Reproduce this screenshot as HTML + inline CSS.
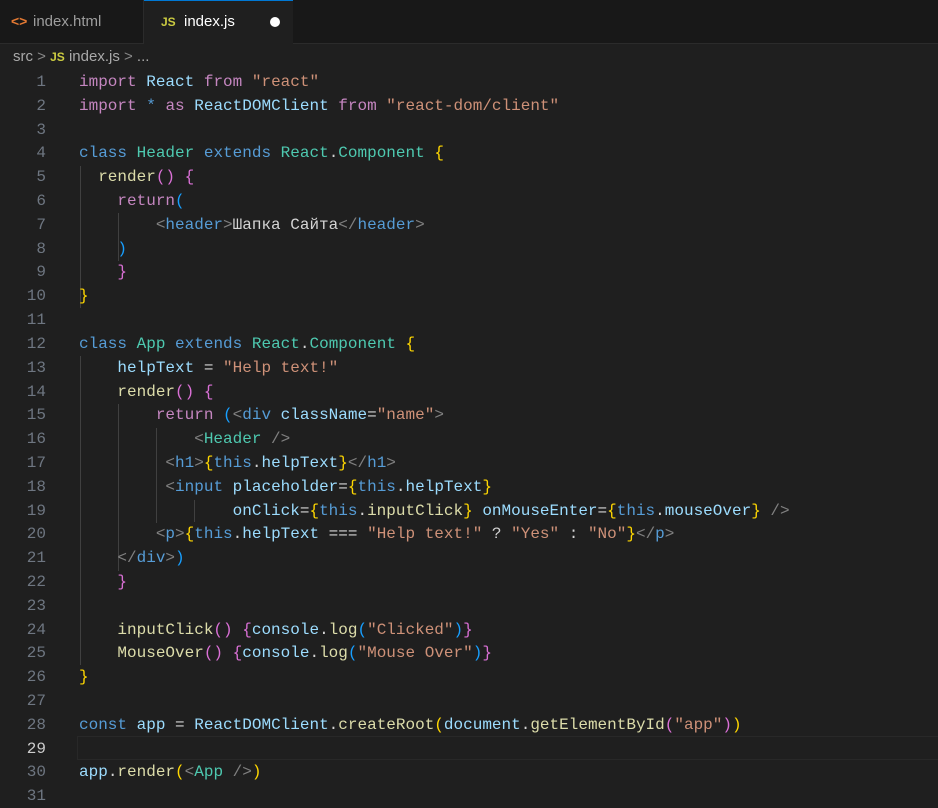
<!DOCTYPE html>
<html><head><meta charset="utf-8"><style>
body{margin:0;width:938px;height:808px;background:#1f1f1f;overflow:hidden;font-family:"Liberation Sans",sans-serif;position:relative}
.tabs{position:absolute;left:0;top:0;width:938px;height:43px;background:#181818;border-bottom:1px solid #2b2b2b}
.tab{position:absolute;top:0;height:43px;font-size:15px;line-height:43px}
.t1{left:0;width:143px;color:#9d9d9d;border-right:1px solid #2b2b2b}
.t2{left:144px;width:149px;background:#1f1f1f;color:#fff;border-top:1px solid #0078d4;box-sizing:border-box;height:44px}
.crumb{position:absolute;top:48px;left:13px;font-size:15px;color:#a9a9a9}
.js{color:#cbcb41;font-weight:bold;font-size:12px}
.code{position:absolute;left:0;top:0;font-family:"Liberation Mono",monospace;font-size:16px}
.ln{position:absolute;left:0;width:46px;text-align:right;color:#6e7681;height:24px;line-height:24px}
.cl{position:absolute;left:79px;white-space:pre;color:#d4d4d4;height:24px;line-height:24px}
.k{color:#c586c0}.b{color:#569cd6}.v{color:#9cdcfe}.t{color:#4ec9b0}.s{color:#ce9178}.f{color:#dcdcaa}.g{color:#ffd700}.p{color:#da70d6}.l{color:#179fff}.a{color:#808080}.w{color:#d4d4d4}
.guide{position:absolute;width:1px;background:#404040}
.cur{position:absolute;left:77px;top:736px;width:861px;height:22px;border:1px solid #282828;border-right:none}
</style></head><body>
<div class="tabs">
<div class="tab t1"><span style="position:absolute;left:11px;color:#e37933;font-weight:bold;font-size:14px">&lt;&gt;</span><span style="position:absolute;left:33px">index.html</span></div>
<div class="tab t2"><span class="js" style="position:absolute;left:17px;line-height:42px">JS</span><span style="position:absolute;left:40px;line-height:42px">index.js</span><span style="position:absolute;left:126px;top:16px;width:10px;height:10px;border-radius:50%;background:#fff"></span></div>
</div>
<div class="crumb">src <span style="color:#888">&gt;</span> <span class="js">JS</span> index.js <span style="color:#888">&gt;</span> ...</div>
<div class="guide" style="left:80px;top:166px;height:142px"></div>
<div class="guide" style="left:118px;top:213px;height:48px"></div>
<div class="guide" style="left:80px;top:356px;height:309px"></div>
<div class="guide" style="left:118px;top:404px;height:167px"></div>
<div class="guide" style="left:156px;top:428px;height:95px"></div>
<div class="guide" style="left:194px;top:500px;height:22px"></div>
<div class="cur"></div>
<div class="code">
<div class="ln" style="top:70px">1</div><div class="cl" style="top:70px"><span class="k">import</span> <span class="v">React</span> <span class="k">from</span> <span class="s">"react"</span></div>
<div class="ln" style="top:94px">2</div><div class="cl" style="top:94px"><span class="k">import</span> <span class="b">*</span> <span class="k">as</span> <span class="v">ReactDOMClient</span> <span class="k">from</span> <span class="s">"react-dom/client"</span></div>
<div class="ln" style="top:118px">3</div>
<div class="ln" style="top:141px">4</div><div class="cl" style="top:141px"><span class="b">class</span> <span class="t">Header</span> <span class="b">extends</span> <span class="t">React</span>.<span class="t">Component</span> <span class="g">{</span></div>
<div class="ln" style="top:165px">5</div><div class="cl" style="top:165px">  <span class="f">render</span><span class="p">()</span> <span class="p">{</span></div>
<div class="ln" style="top:189px">6</div><div class="cl" style="top:189px">    <span class="k">return</span><span class="l">(</span></div>
<div class="ln" style="top:213px">7</div><div class="cl" style="top:213px">        <span class="a">&lt;</span><span class="b">header</span><span class="a">&gt;</span>Шапка Сайта<span class="a">&lt;/</span><span class="b">header</span><span class="a">&gt;</span></div>
<div class="ln" style="top:237px">8</div><div class="cl" style="top:237px">    <span class="l">)</span></div>
<div class="ln" style="top:260px">9</div><div class="cl" style="top:260px">    <span class="p">}</span></div>
<div class="ln" style="top:284px">10</div><div class="cl" style="top:284px"><span class="g">}</span></div>
<div class="ln" style="top:308px">11</div>
<div class="ln" style="top:332px">12</div><div class="cl" style="top:332px"><span class="b">class</span> <span class="t">App</span> <span class="b">extends</span> <span class="t">React</span>.<span class="t">Component</span> <span class="g">{</span></div>
<div class="ln" style="top:356px">13</div><div class="cl" style="top:356px">    <span class="v">helpText</span> = <span class="s">"Help text!"</span></div>
<div class="ln" style="top:380px">14</div><div class="cl" style="top:380px">    <span class="f">render</span><span class="p">()</span> <span class="p">{</span></div>
<div class="ln" style="top:403px">15</div><div class="cl" style="top:403px">        <span class="k">return</span> <span class="l">(</span><span class="a">&lt;</span><span class="b">div</span> <span class="v">className</span>=<span class="s">"name"</span><span class="a">&gt;</span></div>
<div class="ln" style="top:427px">16</div><div class="cl" style="top:427px">            <span class="a">&lt;</span><span class="t">Header</span> <span class="a">/&gt;</span></div>
<div class="ln" style="top:451px">17</div><div class="cl" style="top:451px">         <span class="a">&lt;</span><span class="b">h1</span><span class="a">&gt;</span><span class="g">{</span><span class="b">this</span>.<span class="v">helpText</span><span class="g">}</span><span class="a">&lt;/</span><span class="b">h1</span><span class="a">&gt;</span></div>
<div class="ln" style="top:475px">18</div><div class="cl" style="top:475px">         <span class="a">&lt;</span><span class="b">input</span> <span class="v">placeholder</span>=<span class="g">{</span><span class="b">this</span>.<span class="v">helpText</span><span class="g">}</span></div>
<div class="ln" style="top:499px">19</div><div class="cl" style="top:499px">                <span class="v">onClick</span>=<span class="g">{</span><span class="b">this</span>.<span class="f">inputClick</span><span class="g">}</span> <span class="v">onMouseEnter</span>=<span class="g">{</span><span class="b">this</span>.<span class="v">mouseOver</span><span class="g">}</span> <span class="a">/&gt;</span></div>
<div class="ln" style="top:522px">20</div><div class="cl" style="top:522px">        <span class="a">&lt;</span><span class="b">p</span><span class="a">&gt;</span><span class="g">{</span><span class="b">this</span>.<span class="v">helpText</span> === <span class="s">"Help text!"</span> ? <span class="s">"Yes"</span> : <span class="s">"No"</span><span class="g">}</span><span class="a">&lt;/</span><span class="b">p</span><span class="a">&gt;</span></div>
<div class="ln" style="top:546px">21</div><div class="cl" style="top:546px">    <span class="a">&lt;/</span><span class="b">div</span><span class="a">&gt;</span><span class="l">)</span></div>
<div class="ln" style="top:570px">22</div><div class="cl" style="top:570px">    <span class="p">}</span></div>
<div class="ln" style="top:594px">23</div>
<div class="ln" style="top:618px">24</div><div class="cl" style="top:618px">    <span class="f">inputClick</span><span class="p">()</span> <span class="p">{</span><span class="v">console</span>.<span class="f">log</span><span class="l">(</span><span class="s">"Clicked"</span><span class="l">)</span><span class="p">}</span></div>
<div class="ln" style="top:641px">25</div><div class="cl" style="top:641px">    <span class="f">MouseOver</span><span class="p">()</span> <span class="p">{</span><span class="v">console</span>.<span class="f">log</span><span class="l">(</span><span class="s">"Mouse Over"</span><span class="l">)</span><span class="p">}</span></div>
<div class="ln" style="top:665px">26</div><div class="cl" style="top:665px"><span class="g">}</span></div>
<div class="ln" style="top:689px">27</div>
<div class="ln" style="top:713px">28</div><div class="cl" style="top:713px"><span class="b">const</span> <span class="v">app</span> = <span class="v">ReactDOMClient</span>.<span class="f">createRoot</span><span class="g">(</span><span class="v">document</span>.<span class="f">getElementById</span><span class="p">(</span><span class="s">"app"</span><span class="p">)</span><span class="g">)</span></div>
<div class="ln" style="top:737px;color:#ccc">29</div>
<div class="ln" style="top:760px">30</div><div class="cl" style="top:760px"><span class="v">app</span>.<span class="f">render</span><span class="g">(</span><span class="a">&lt;</span><span class="t">App</span> <span class="a">/&gt;</span><span class="g">)</span></div>
<div class="ln" style="top:784px">31</div>
</div>
</body></html>
